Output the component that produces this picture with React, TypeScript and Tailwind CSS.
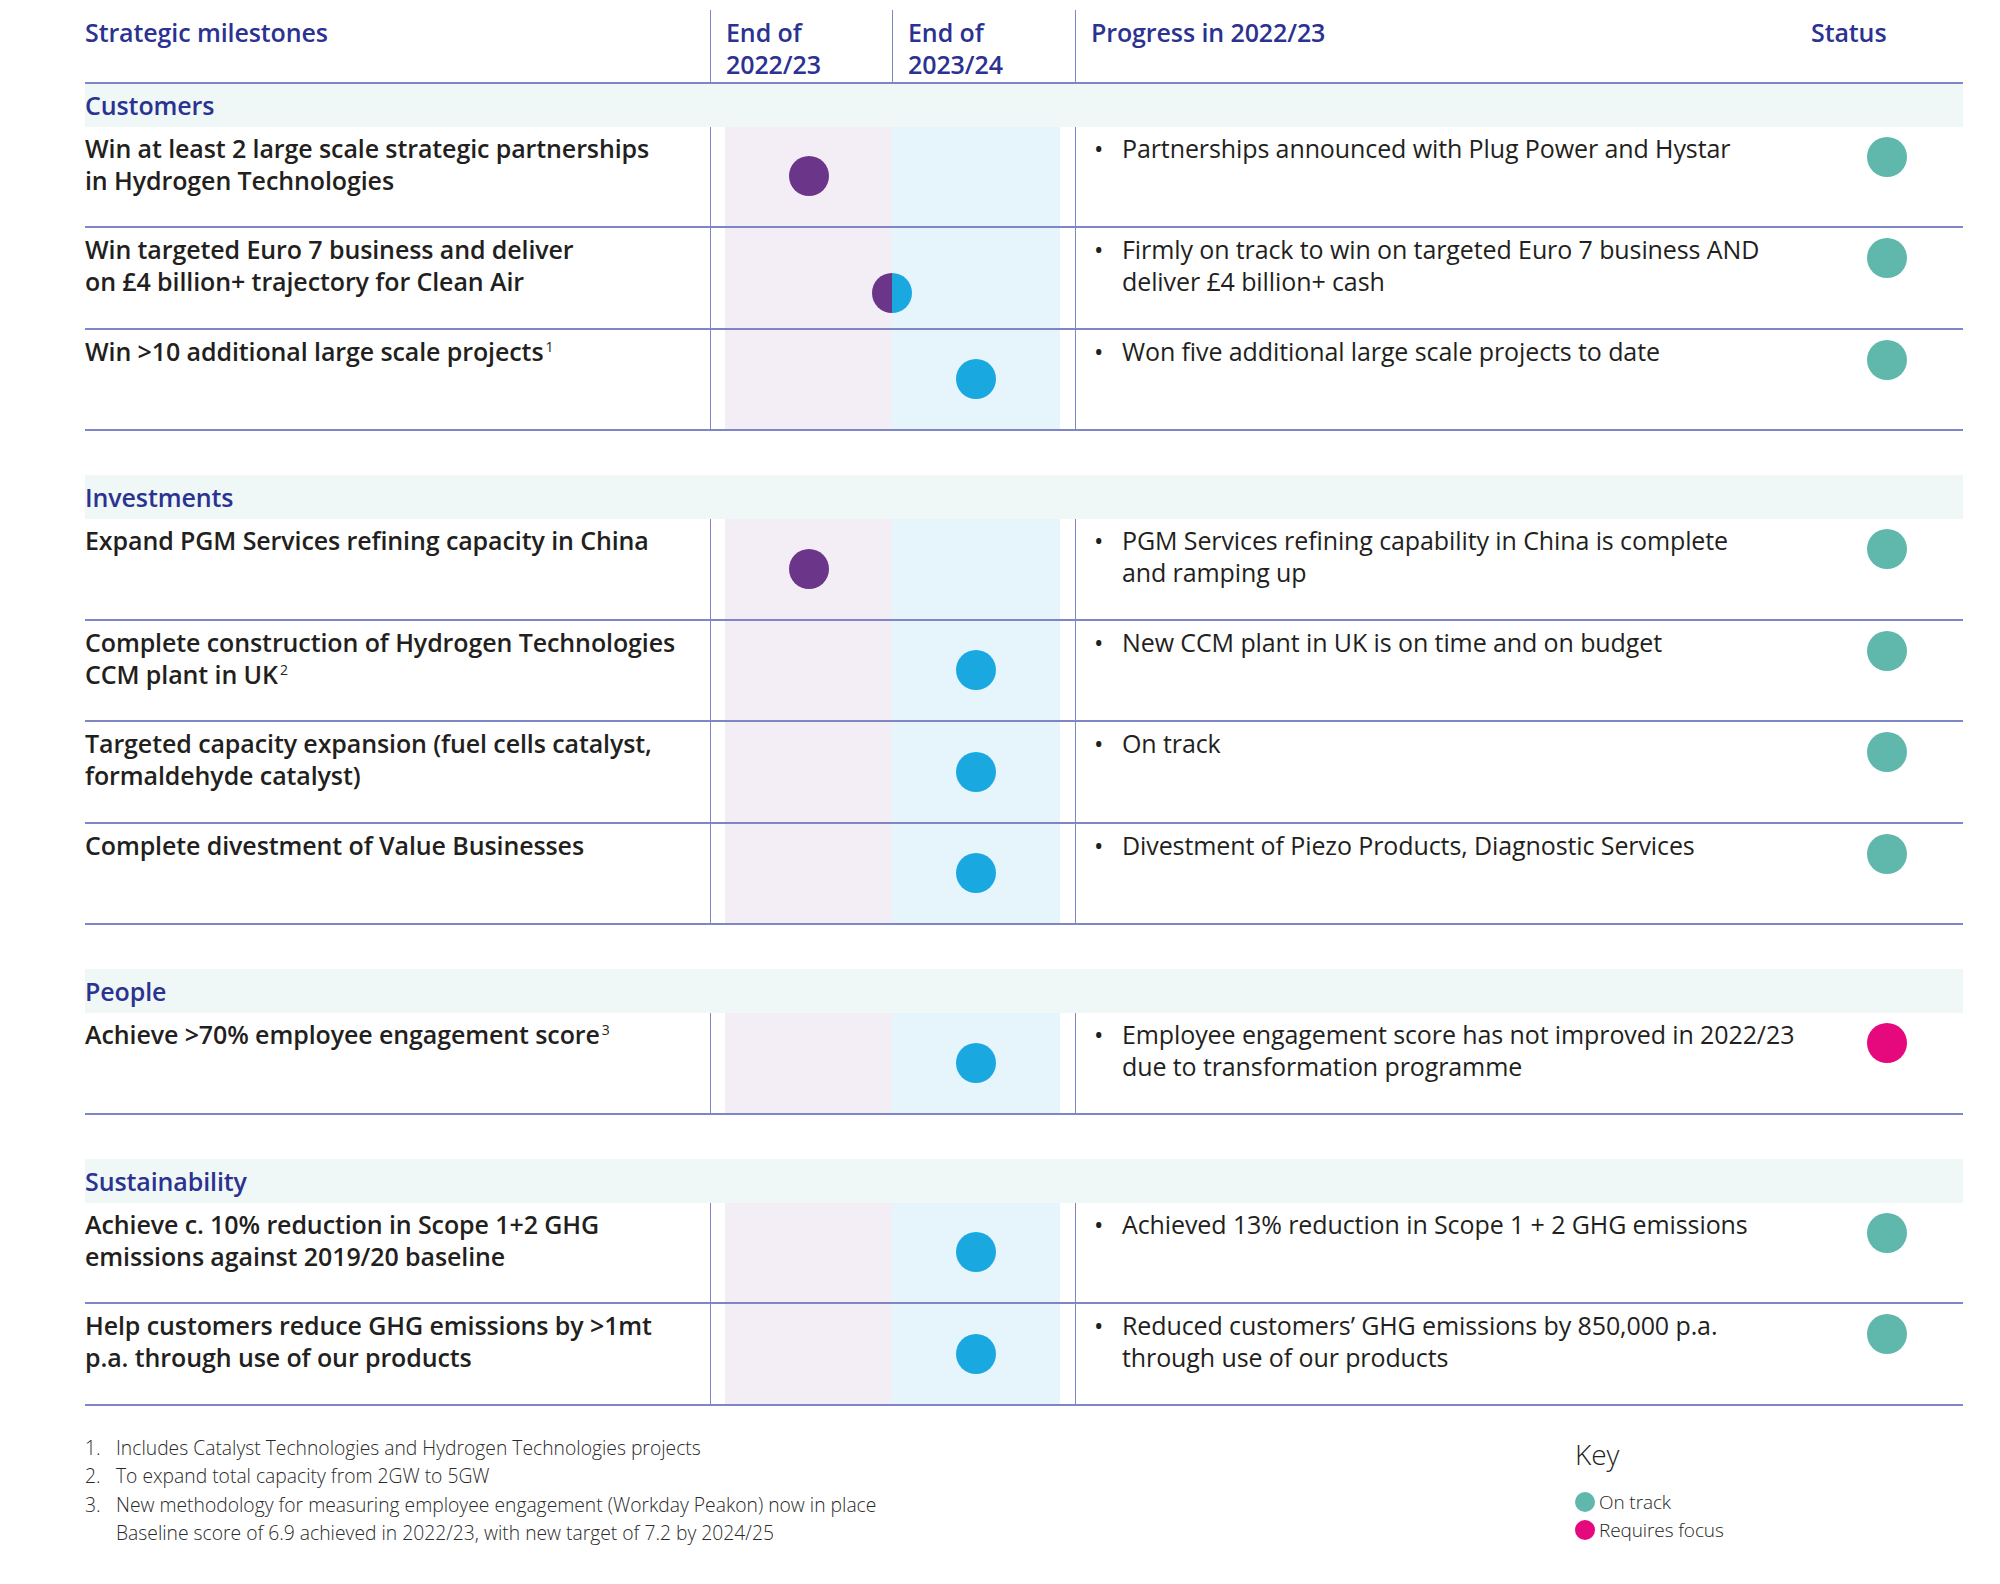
type Dot = "start" | "end" | "both";

type Milestone = {
  title: string[];
  note?: string;
  dot: Dot;
  dotShift?: boolean;
  progress: string[];
  status: "ok" | "focus";
};

type Section = { name: string; rows: Milestone[]; first?: boolean };

const sections: Section[] = [
  {
    name: "Customers",
    first: true,
    rows: [
      {
        title: ["Win at least 2 large scale strategic partnerships", "in Hydrogen Technologies"],
        dot: "start",
        progress: ["Partnerships announced with Plug Power and Hystar"],
        status: "ok",
      },
      {
        title: ["Win targeted Euro 7 business and deliver", "on £4 billion+ trajectory for Clean Air"],
        dot: "both",
        dotShift: true,
        progress: ["Firmly on track to win on targeted Euro 7 business AND", "deliver £4 billion+ cash"],
        status: "ok",
      },
      {
        title: ["Win >10 additional large scale projects"],
        note: "1",
        dot: "end",
        progress: ["Won five additional large scale projects to date"],
        status: "ok",
      },
    ],
  },
  {
    name: "Investments",
    rows: [
      {
        title: ["Expand PGM Services refining capacity in China"],
        dot: "start",
        progress: ["PGM Services refining capability in China is complete", "and ramping up"],
        status: "ok",
      },
      {
        title: ["Complete construction of Hydrogen Technologies", "CCM plant in UK"],
        note: "2",
        dot: "end",
        progress: ["New CCM plant in UK is on time and on budget"],
        status: "ok",
      },
      {
        title: ["Targeted capacity expansion (fuel cells catalyst,", "formaldehyde catalyst)"],
        dot: "end",
        progress: ["On track"],
        status: "ok",
      },
      {
        title: ["Complete divestment of Value Businesses"],
        dot: "end",
        progress: ["Divestment of Piezo Products, Diagnostic Services"],
        status: "ok",
      },
    ],
  },
  {
    name: "People",
    rows: [
      {
        title: ["Achieve >70% employee engagement score"],
        note: "3",
        dot: "end",
        progress: ["Employee engagement score has not improved in 2022/23", "due to transformation programme"],
        status: "focus",
      },
    ],
  },
  {
    name: "Sustainability",
    rows: [
      {
        title: ["Achieve c. 10% reduction in Scope 1+2 GHG", "emissions against 2019/20 baseline"],
        dot: "end",
        progress: ["Achieved 13% reduction in Scope 1 + 2 GHG emissions"],
        status: "ok",
      },
      {
        title: ["Help customers reduce GHG emissions by >1mt", "p.a. through use of our products"],
        dot: "end",
        progress: ["Reduced customers’ GHG emissions by 850,000 p.a.", "through use of our products"],
        status: "ok",
      },
    ],
  },
];

function TimelineDot({ dot, shift }: { dot: Dot; shift?: boolean }) {
  const place = dot === "start" ? "ml-[64px]" : dot === "end" ? "ml-[231px]" : "ml-[147px]";
  const fill =
    dot === "start"
      ? "bg-[#6b3589]"
      : dot === "end"
        ? "bg-[#1aa8e1]"
        : "bg-[linear-gradient(90deg,#6b3589_50%,#1aa8e1_50%)]";
  return <div className={`h-[40px] w-[40px] rounded-full ${place} ${fill} ${shift ? "mt-[31px]" : ""}`} />;
}

function Row({ row }: { row: Milestone }) {
  return (
    <div className="flex h-[101.5px] border-b-2 border-[#7f86c5]">
      <div className="w-[625px] pt-[5px] font-semibold text-[#231f20]">
        {row.title.map((line, i) => (
          <div key={i} className="whitespace-nowrap">
            {line}
            {row.note && i === row.title.length - 1 && (
              <span className="relative -top-[9px] ml-[2px] text-[14px] leading-none font-normal">{row.note}</span>
            )}
          </div>
        ))}
      </div>
      <div className="w-[1px] bg-[#7f86c5]" />
      <div className="w-[14px]" />
      <div className="flex w-[335px] items-center bg-[linear-gradient(90deg,#f3edf5_167px,#e6f4fb_167px)]">
        <TimelineDot dot={row.dot} shift={row.dotShift} />
      </div>
      <div className="w-[15px]" />
      <div className="flex flex-1 border-l border-[#7f86c5]">
        <div className="flex flex-1 pt-[5px] pl-[18px] text-[#231f20]">
          <span className="w-[28px]">•</span>
          <div>
            {row.progress.map((line, i) => (
              <div key={i} className="whitespace-nowrap">
                {line}
              </div>
            ))}
          </div>
        </div>
        <div className="w-[96px] pt-[10px]">
          <div
            className={`h-[40px] w-[40px] rounded-full ${row.status === "ok" ? "bg-[#5fb8ab]" : "bg-[#e6097e]"}`}
          />
        </div>
      </div>
    </div>
  );
}

function SectionBlock({ section }: { section: Section }) {
  return (
    <div className={section.first ? "" : "mt-[44px]"}>
      <div
        className={`flex items-center bg-[#eff8f6] font-semibold text-[#2b3291] ${section.first ? "h-[42.5px]" : "h-[44px]"}`}
      >
        {section.name}
      </div>
      {section.rows.map((row, i) => (
        <Row key={i} row={row} />
      ))}
    </div>
  );
}

export default function App() {
  return (
    <div className="min-h-[1584px] w-[2000px] bg-white font-['Open_Sans',sans-serif] text-[25px] leading-[32px] tracking-[-0.1px]">
      <div className="ml-[85px] w-[1878px]">
        <div className="mt-[10px] flex h-[74px] border-b-2 border-[#7f86c5] font-semibold text-[#2b3291]">
          <div className="w-[625px] pt-[6px]">Strategic milestones</div>
          <div className="w-[182px] border-l border-[#7f86c5] pt-[6px] pl-[15px]">
            End of
            <br />
            2022/23
          </div>
          <div className="w-[183px] border-l border-[#7f86c5] pt-[6px] pl-[15px]">
            End of
            <br />
            2023/24
          </div>
          <div className="flex flex-1 border-l border-[#7f86c5] pt-[6px] pl-[15px]">
            <div className="flex-1">Progress in 2022/23</div>
            <div className="w-[152px]">Status</div>
          </div>
        </div>

        {sections.map((section) => (
          <SectionBlock key={section.name} section={section} />
        ))}

        <div className="mt-[28px] flex">
          <div className="flex-1 text-[19.3px] leading-[28.5px] font-light tracking-normal text-[#2a2a2a]">
            <div className="flex">
              <span className="w-[31px]">1.</span>
              <span>Includes Catalyst Technologies and Hydrogen Technologies projects</span>
            </div>
            <div className="flex">
              <span className="w-[31px]">2.</span>
              <span>To expand total capacity from 2GW to 5GW</span>
            </div>
            <div className="flex">
              <span className="w-[31px]">3.</span>
              <span>
                New methodology for measuring employee engagement (Workday Peakon) now in place
                <br />
                Baseline score of 6.9 achieved in 2022/23, with new target of 7.2 by 2024/25
              </span>
            </div>
          </div>
          <div className="w-[388px] pt-[2px] text-[#231f20]">
            <div className="text-[28px] leading-[36px] font-light">Key</div>
            <div className="mt-[16px] text-[19px] leading-[28px] font-light">
              <div className="flex items-center gap-[4px]">
                <span className="h-[20px] w-[20px] rounded-full bg-[#5fb8ab]" />
                On track
              </div>
              <div className="flex items-center gap-[4px]">
                <span className="h-[20px] w-[20px] rounded-full bg-[#e6097e]" />
                Requires focus
              </div>
            </div>
          </div>
        </div>
      </div>
    </div>
  );
}
